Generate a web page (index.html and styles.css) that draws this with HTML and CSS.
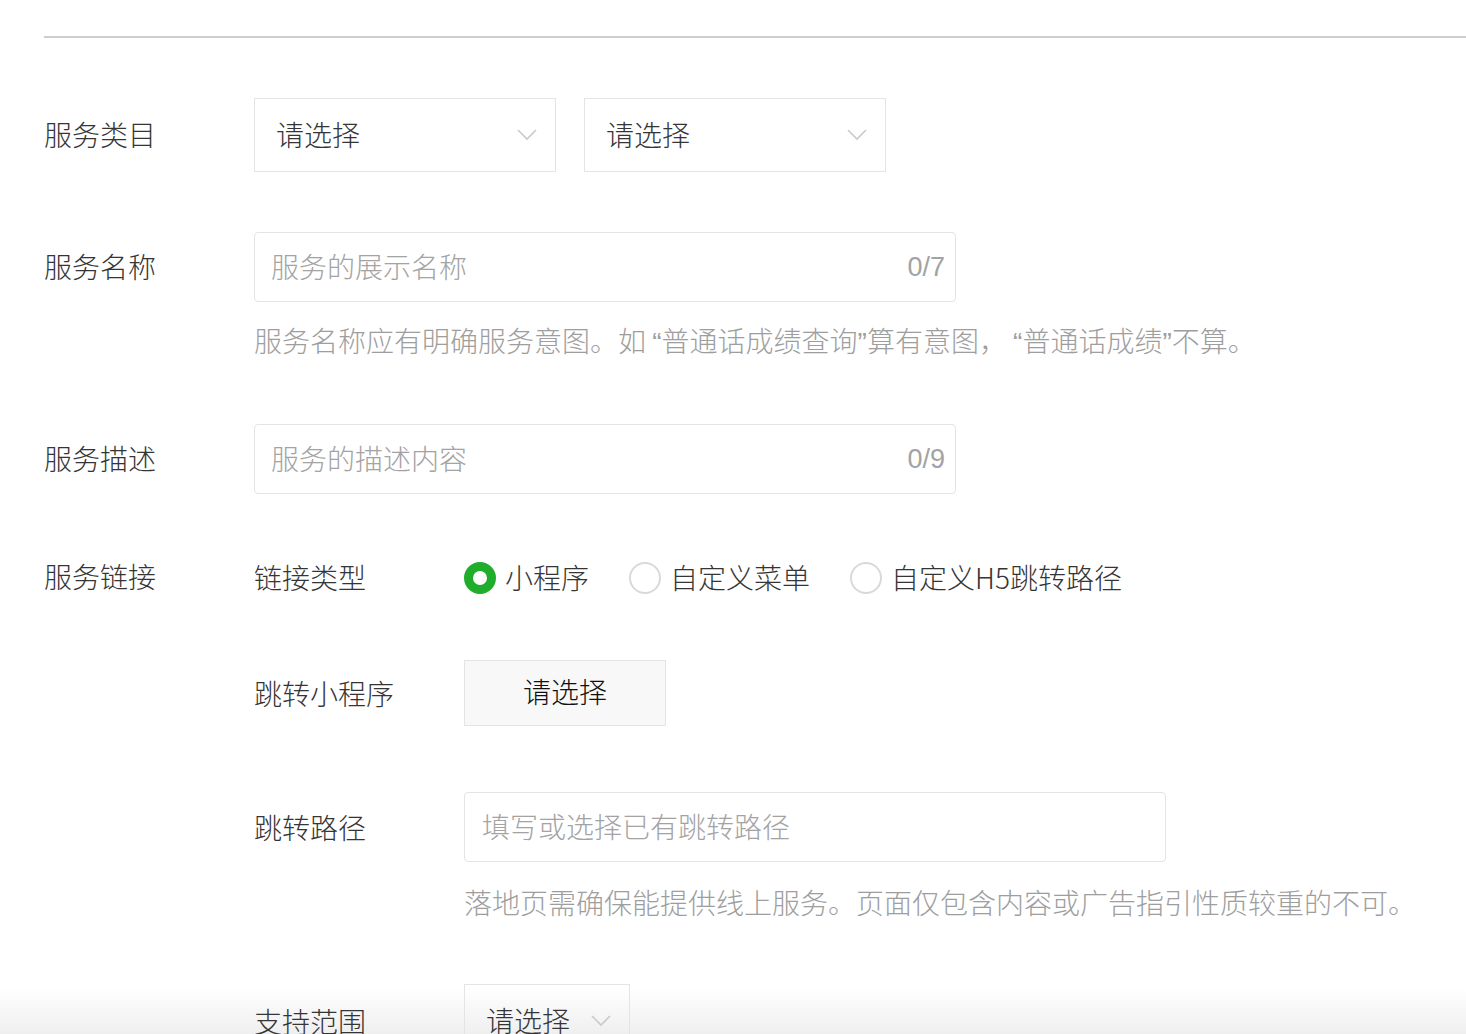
FILE: index.html
```html
<!DOCTYPE html>
<html lang="zh-CN">
<head>
<meta charset="utf-8">
<title>服务设置</title>
<link rel="stylesheet" href="styles.css">
</head>
<body>
<div class="page">
  <div class="divider"></div>

  <div class="row row-category">
    <div class="label">服务类目</div>
    <div class="controls inline">
      <div class="select wide"><span>请选择</span><svg class="chev" viewBox="0 0 20 12"><path d="M1 1 L10 10 L19 1"/></svg></div>
      <div class="select wide"><span>请选择</span><svg class="chev" viewBox="0 0 20 12"><path d="M1 1 L10 10 L19 1"/></svg></div>
    </div>
  </div>

  <div class="row row-name">
    <div class="label">服务名称</div>
    <div class="controls">
      <div class="input"><span class="ph">服务的展示名称</span><span class="count">0/7</span></div>
    </div>
  </div>
  <div class="hint hint-name">服务名称应有明确服务意图。如 <span class="q">“</span>普通话成绩查询<span class="q">”</span>算有意图， <span class="q">“</span>普通话成绩<span class="q">”</span>不算。</div>

  <div class="row row-desc">
    <div class="label">服务描述</div>
    <div class="controls">
      <div class="input"><span class="ph">服务的描述内容</span><span class="count">0/9</span></div>
    </div>
  </div>

  <div class="row row-link">
    <div class="label">服务链接</div>
    <div class="sub">
      <div class="sublabel">链接类型</div>
      <div class="radios">
        <div class="radio checked"><span class="dot"></span>小程序</div>
        <div class="radio"><span class="dot"></span>自定义菜单</div>
        <div class="radio"><span class="dot"></span>自定义H5跳转路径</div>
      </div>
    </div>
  </div>

  <div class="row row-mp">
    <div class="label"></div>
    <div class="sub">
      <div class="sublabel">跳转小程序</div>
      <div class="btn">请选择</div>
    </div>
  </div>

  <div class="row row-path">
    <div class="label"></div>
    <div class="sub">
      <div class="sublabel">跳转路径</div>
      <div class="input"><span class="ph">填写或选择已有跳转路径</span></div>
    </div>
  </div>
  <div class="hint hint-path">落地页需确保能提供线上服务。页面仅包含内容或广告指引性质较重的不可。</div>

  <div class="row row-scope">
    <div class="label"></div>
    <div class="sub">
      <div class="sublabel">支持范围</div>
      <div class="select narrow"><span>请选择</span><svg class="chev" viewBox="0 0 20 12"><path d="M1 1 L10 10 L19 1"/></svg></div>
    </div>
  </div>
</div>
</body>
</html>
```

FILE: styles.css
```css
html {
  margin: 0;
  padding: 0;
  background: #fff;
}
body {
  margin: 0;
  padding: 0;
  font-family: "Noto Sans CJK SC", "Noto Sans", sans-serif;
  font-weight: 300;
  font-size: 28px;
  color: #353535;
  overflow: hidden;
  height: 1034px;
  background: linear-gradient(to bottom, #ffffff 0, #ffffff 988px, #efefef 1034px);
}
.page {
  padding-left: 44px;
}
.divider {
  margin-top: 36px;
  height: 2px;
  background: #cdcdcd;
}
.row {
  display: flex;
  align-items: center;
}
.label {
  width: 210px;
  flex: none;
  line-height: 40px;
  margin-top: -3px;
}
.controls {
  display: flex;
}
.inline {
  gap: 28px;
}
.row-category { margin-top: 60px; }
.row-name { margin-top: 60px; }
.row-desc { margin-top: 61px; }
.row-link { margin-top: 63px; }
.row-mp { margin-top: 63px; }
.row-path { margin-top: 66px; }
.row-scope { margin-top: 62px; }

.select {
  box-sizing: border-box;
  border: 1px solid #e4e4e4;
  background: transparent;
  display: flex;
  align-items: center;
  justify-content: space-between;
  color: #353535;
}
.select span {
  margin-top: -3px;
}
.select.wide {
  width: 302px;
  height: 74px;
  padding: 0 18px 0 21px;
}
.select.narrow {
  width: 166px;
  height: 74px;
  padding: 0 18px 0 21px;
}
.chev {
  width: 20px;
  height: 12px;
  fill: none;
  stroke: #cacaca;
  stroke-width: 1.6;
}
.input {
  box-sizing: border-box;
  width: 702px;
  height: 70px;
  border: 1px solid #e4e4e4;
  border-radius: 4px;
  display: flex;
  align-items: center;
  justify-content: space-between;
  padding: 0 10px 0 16px;
}
.ph {
  color: #a3a3a3;
  margin-top: -2px;
}
.count {
  color: #a3a3a3;
  font-family: "Liberation Sans", Arial, sans-serif;
  font-size: 27px;
}
.hint {
  color: #9e9e9e;
  line-height: 40px;
}
.q {
  font-family: "Liberation Sans", Arial, sans-serif;
}
.hint-name {
  margin-top: 18px;
  padding-left: 210px;
}
.hint-path {
  margin-top: 20px;
  padding-left: 420px;
}
.sub {
  display: flex;
  align-items: center;
}
.sublabel {
  width: 210px;
  flex: none;
  line-height: 40px;
}
.radios {
  display: flex;
  align-items: center;
  gap: 40px;
}
.radio {
  display: flex;
  align-items: center;
  gap: 9px;
  line-height: 40px;
}
.dot {
  box-sizing: border-box;
  width: 32px;
  height: 32px;
  border-radius: 50%;
  border: 2px solid #d9d9d9;
  background: #fff;
  margin-top: 2px;
}
.radio.checked .dot {
  border: 9px solid #20ad2b;
}
.btn {
  box-sizing: border-box;
  width: 202px;
  height: 66px;
  border: 1px solid #e4e4e4;
  background: #f8f8f8;
  color: #111;
  display: flex;
  align-items: center;
  justify-content: center;
  padding-bottom: 4px;
}
.row-path .input {
  padding-left: 17px;
}
```
